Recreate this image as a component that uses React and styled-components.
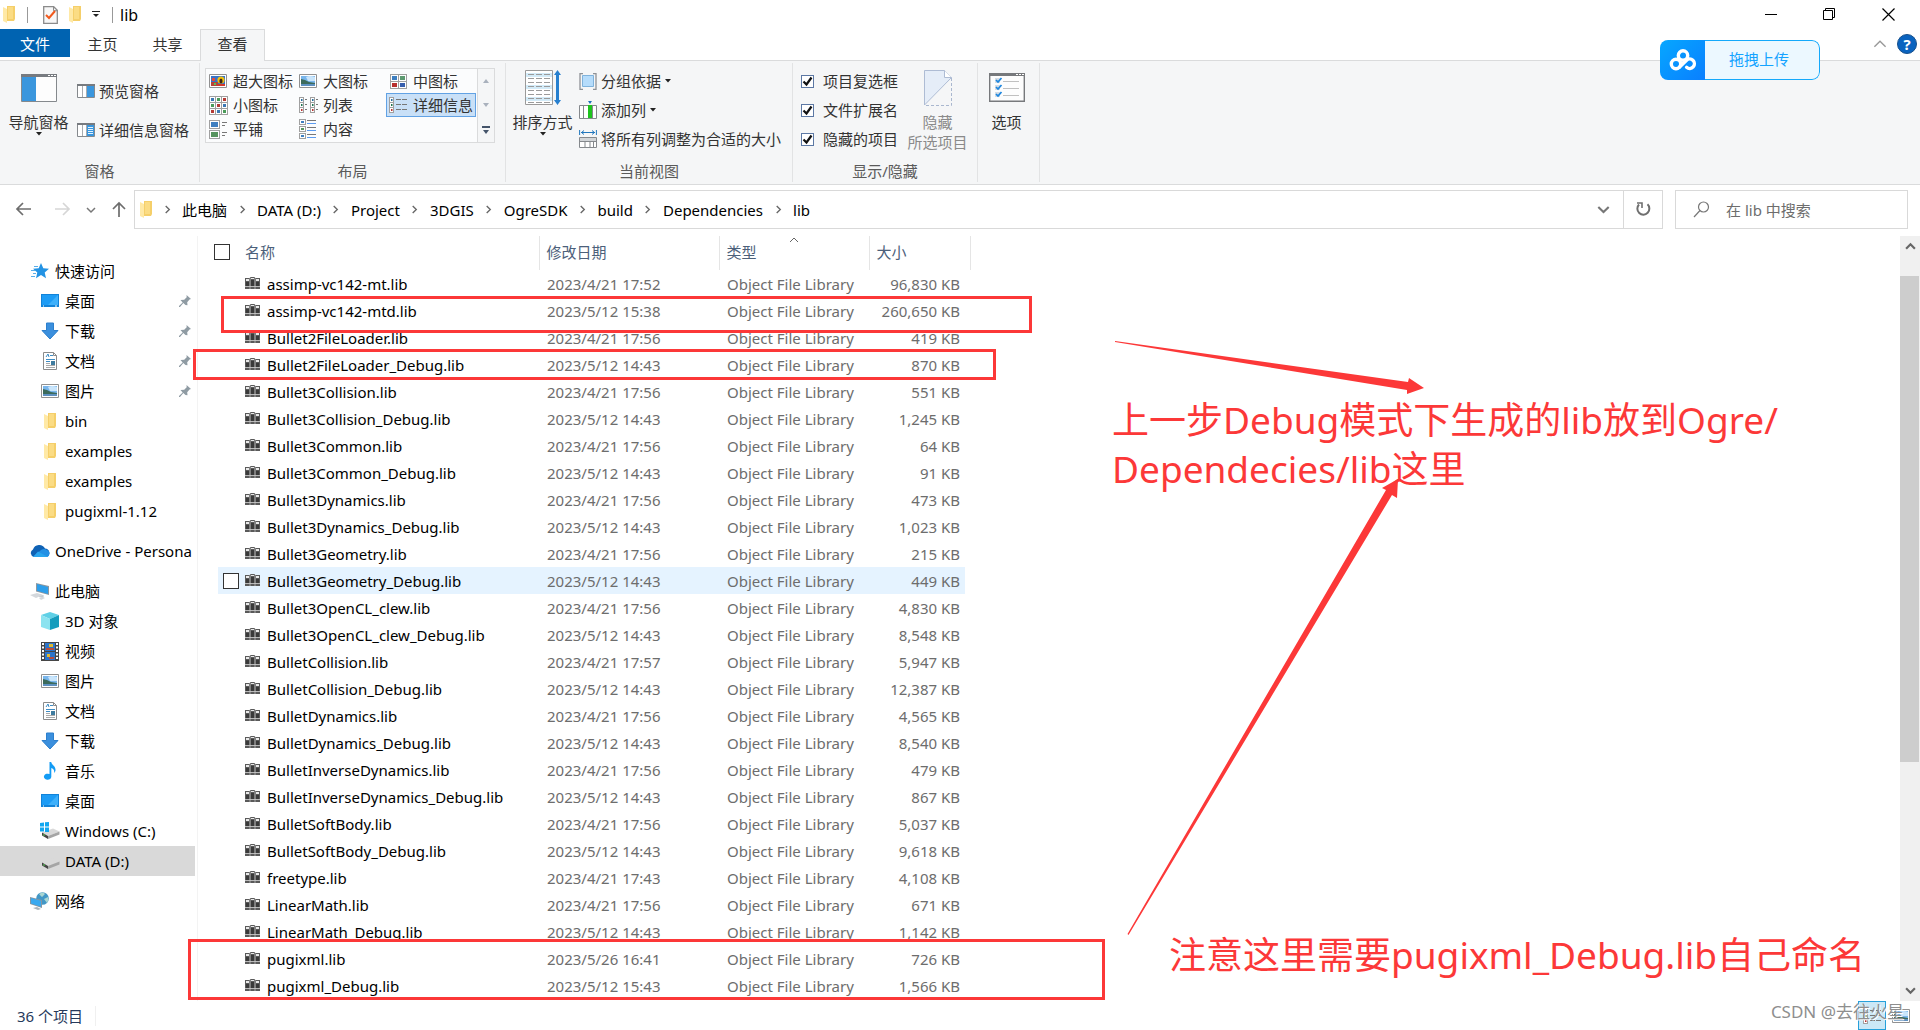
import React, { useState } from 'react';
import styled, { createGlobalStyle } from 'styled-components';

const GlobalStyle = createGlobalStyle`
    * {
        box-sizing: border-box;
    }
    body {
        margin: 0;
        background: #fff;
        color: #000;
        font: 15px/20px "Noto Sans", "Noto Sans CJK SC", sans-serif;
    }
    button, input {
        font: inherit;
        color: inherit;
    }
    button {
        padding: 0;
        border: 0;
        background: none;
        white-space: nowrap;
    }
    a {
        color: inherit;
        text-decoration: none;
    }
    svg {
        display: block;
        flex: none;
    }
`;

/* ---------- icons ---------- */

const FolderIcon = () => <svg width="12" height="17" viewBox="0 0 12 17">
    <path d="M4 0h8v13l-1 2H4z" fill="#f5cf6a" />
    <path d="M5 1h5v12H5z" fill="#fbdc84" />
    <path d="M0 1l4 2v14l-4-2z" fill="#ffe9a6" />
</svg>;

const CheckDocIcon = () => <svg width="15" height="18" viewBox="0 0 15 18">
    <path d="M.7.7h10l3.6 3.6v13H.7z" fill="#f7f7f7" stroke="#8b8b8b" strokeWidth="1.3" />
    <path d="M10.5.7v4h4" fill="none" stroke="#8b8b8b" />
    <path d="M3 9l3 3 6-7" fill="none" stroke="#f1591d" strokeWidth="2" />
</svg>;

const Caret = () => <svg width="6" height="4" viewBox="0 0 6 4">
    <path d="M0 0h6L3 3.5z" fill="#222" />
</svg>;

const Chevron = ({ dir = 'down', size = 10, color = '#666', width = 1.5 }) => {
    const points = {
        down: 'M1 3l4 4 4-4',
        up: 'M1 7l4-4 4 4',
        right: 'M3 1l4 4-4 4',
    };
    return <svg width={size} height={size} viewBox="0 0 10 10">
        <path d={points[dir]} fill="none" stroke={color} strokeWidth={width} />
    </svg>;
};

const ArrowIcon = ({ dir = 'left', color = '#6d6d6d' }) => {
    const paths = {
        left: 'M16 8H2M8 2L2 8l6 6',
        right: 'M1 8h14M9 2l6 6-6 6',
        up: 'M8 16V2M2 8l6-6 6 6',
    };
    return <svg width="17" height="17" viewBox="0 0 17 17">
        <path d={paths[dir]} fill="none" stroke={color} strokeWidth="1.7" />
    </svg>;
};

const NavPaneIcon = () => <svg width="36" height="28" viewBox="0 0 36 28">
    <path d="M.5.5h35v27H.5z" fill="#fdfdfd" stroke="#85898d" />
    <path d="M0 0h36v3H0z" fill="#777b80" />
    <path d="M27 1h2v1h-2zM30 1h2v1h-2zM33 1h2v1h-2z" fill="#fff" />
    <path d="M1 3h14v24H1z" fill="#3a96dd" />
</svg>;

const PaneIcon = ({ details }) => <svg width="18" height="14" viewBox="0 0 18 14">
    <path d="M.5.5h17v13H.5z" fill="#fff" stroke="#85898d" />
    <path d="M0 0h18v2H0z" fill="#777b80" />
    <path d="M5.5 2v11M9.5 2v11" stroke="#a8acb0" />
    <path d="M10 2h7v11h-7z" fill="#3a96dd" />
    {details && <path d="M11 4.5h5M11 6.5h5M11 8.5h5M11 10.5h5" stroke="#e4f2fd" />}
</svg>;

const PictureIcon = () => <svg width="18" height="14" viewBox="0 0 18 14">
    <path d="M.5.5h17v13H.5z" fill="#fff" stroke="#919191" />
    <path d="M2 2h14v10H2z" fill="#79b6ec" />
    <path d="M7 3q4-2 9 0v4H9z" fill="#c9e5fb" />
    <path d="M2 5l4 1 4 2 6 1v1H2z" fill="#3c6b5c" />
    <path d="M2 10h14v2H2z" fill="#5d90c0" />
</svg>;

const HugeIcon = () => <svg width="18" height="14" viewBox="0 0 18 14">
    <path d="M.5.5h17v13H.5z" fill="#fff" stroke="#919191" />
    <path d="M2 2h14v10H2z" fill="#3674c8" />
    <path d="M2 8h7v4H2z" fill="#b94237" />
    <path d="M3 4h3v3H3z" fill="#e24b39" />
    <path d="M5 9h2v2H5z" fill="#5bc050" />
    <circle cx="12" cy="6" r="3.6" fill="#f2c212" />
    <ellipse cx="12" cy="7" rx="1.6" ry="2.6" fill="#3a2415" />
    <path d="M9 10h7v2H9z" fill="#d3392c" />
</svg>;

const Thumb = ({ x, y, w = 6, h = 5, tone = '#3f7fc0' }) => <g>
    <rect x={x + 0.5} y={y + 0.5} width={w} height={h} fill="#fff" stroke="#a0a0a0" />
    <rect x={x + 2} y={y + 2} width={w - 3} height={h - 3} fill={tone} />
</g>;

const MediumIcon = () => <svg width="17" height="15" viewBox="0 0 17 15">
    <Thumb x={0} y={0} w={8} h={7} />
    <Thumb x={8} y={0} w={8} h={7} tone="#5c9a70" />
    <Thumb x={0} y={7} w={8} h={7} tone="#b8312f" />
    <Thumb x={8} y={7} w={8} h={7} tone="#385fae" />
</svg>;

const SmallIcon = () => <svg width="19" height="19" viewBox="0 0 19 19">
    {[0, 6, 12].map((y, r) => [0, 6, 12].map((x, c) =>
        <Thumb key={x + '-' + y} x={x} y={y} w={6} h={6} tone={['#3c78b4', '#4b9b5a', '#b53a35'][(r + c) % 3]} />
    ))}
</svg>;

const ListIcon = () => <svg width="19" height="16" viewBox="0 0 19 16">
    {[0, 11].map(x => <g key={x}>
        <rect x={x + 0.5} y=".5" width="4" height="15" fill="#fff" stroke="#a0a0a0" />
        <path d={`M${x} 5.5h5M${x} 10.5h5`} stroke="#a0a0a0" />
        <path d={`M${x + 6} 2.5h2M${x + 6} 7.5h2M${x + 6} 12.5h2`} stroke="#777" />
        <path d={`M${x + 2} 2h1.5v2h-1.5z`} fill="#256b99" />
        <path d={`M${x + 2} 7h1.5v2h-1.5z`} fill="#1f7350" />
        <path d={`M${x + 2} 12h1.5v2h-1.5z`} fill="#b8312f" />
    </g>)}
</svg>;

const DetailsIcon = () => <svg width="18" height="16" viewBox="0 0 18 16">
    <rect x=".5" y=".5" width="4" height="15" fill="#fff" stroke="#a0a0a0" />
    <path d="M0 5.5h5M0 10.5h5" stroke="#a0a0a0" />
    <path d="M7 2.5h5M13 2.5h5M7 7.5h5M13 7.5h5M7 12.5h5M13 12.5h5" stroke="#777" />
    <path d="M2 2h1.5v2H2z" fill="#256b99" />
    <path d="M2 7h1.5v2H2z" fill="#1f7350" />
    <path d="M2 12h1.5v2H2z" fill="#b8312f" />
</svg>;

const TilesIcon = () => <svg width="18" height="19" viewBox="0 0 18 19">
    <Thumb x={0} y={0} w={10} h={8} />
    <Thumb x={0} y={10} w={10} h={8} tone="#57945f" />
    <path d="M13 2.5h5M13 5.5h3M13 12.5h5M13 15.5h3" stroke="#777" />
</svg>;

const ContentIcon = () => <svg width="18" height="20" viewBox="0 0 18 20">
    <Thumb x={0} y={0} w={6} h={5} />
    <Thumb x={0} y={7} w={6} h={5} tone="#57945f" />
    <Thumb x={0} y={14} w={6} h={5} />
    <path d="M8 1.5h9M8 8.5h9M8 15.5h9" stroke="#777" />
    <path d="M8 4.5h9M8 11.5h9M8 18.5h9" stroke="#5b9bf0" />
</svg>;

const SortIcon = () => <svg width="36" height="36" viewBox="0 0 36 36">
    <path d="M.5.5h27v34H.5z" fill="#fff" stroke="#9a9a9a" />
    <path d="M1 3h26v4H1zM1 15h26v4H1zM1 27h26v4H1z" fill="#d3ebf8" />
    {[5, 9, 13, 17, 21, 25, 29, 33].map(y =>
        <path key={y} d={`M3 ${y - 0.5}h6M11 ${y - 0.5}h6M19 ${y - 0.5}h6`} stroke="#9b9b9b" />
    )}
    <path d="M32.5 0l3.500 5h-2v25h2l-3.500 5-3.500-5h2V5h-2z" fill="#2780cf" />
</svg>;

const GroupIcon = () => <svg width="18" height="17" viewBox="0 0 18 17">
    <path d="M4 .7H1v15.600h3M14 .7h3v15.600h-3" fill="none" stroke="#8e9297" strokeWidth="1.3" />
    <path d="M3.5 2.5h11v11h-11z" fill="#b5dcfb" stroke="#7fb2db" />
</svg>;

const AddColumnIcon = () => <svg width="18" height="18" viewBox="0 0 18 18">
    <path d="M9 0h4l-2 3z" fill="#1d6fb8" />
    <path d="M.5 4.5h17v13H.5zM4.500 4v13M13.500 4v13" fill="#fff" stroke="#85898d" />
    <path d="M9 4h4v13H9z" fill="#1ec31e" />
</svg>;

const FitIcon = () => <svg width="18" height="18" viewBox="0 0 18 18">
    <path d="M.6 0v5M17.400 0v5M2 2.5h14M5 .5l-2.500 2L5 4.500M13 .5l2.500 2L13 4.500" fill="none" stroke="#2277bd" />
    <path d="M.5 7.500h17v10H.5zM.5 11.500h17M6 12v5M11 12v5M14.500 12v5" fill="#fff" stroke="#85898d" />
    <path d="M1 8h16v3H1z" fill="#d2d5d8" />
</svg>;

const HideIcon = () => <svg width="28" height="36" viewBox="0 0 28 36">
    <path d="M.5 35V.5h20l7 7z" fill="#e5edf8" stroke="#aebcd4" />
    <path d="M20.500.5v7h7" fill="#fff" stroke="#aebcd4" />
    <path d="M27.500 8v27.500H1" fill="none" stroke="#a9b7cf" strokeDasharray="3 2" />
</svg>;

const OptionsIcon = () => <svg width="36" height="29" viewBox="0 0 36 29">
    <path d="M.7.7h34.600v27.600H.7z" fill="#fdfdfd" stroke="#77797c" strokeWidth="1.4" />
    <path d="M0 0h36v3H0z" fill="#77797c" />
    <path d="M27 1h2v1h-2zM30 1h2v1h-2zM33 1h2v1h-2z" fill="#fff" />
    {[7, 14, 21].map(y => <g key={y}>
        <path d={`M6 ${y - 2}h5v5H6z`} fill="#d5dde5" />
        <path d={`M7 ${y}l2 2 3.5-4`} fill="none" stroke="#1c86df" strokeWidth="1.7" />
        <path d={`M14 ${y + 1.5}h16`} stroke="#c0c0c0" />
    </g>)}
</svg>;

const StarIcon = () => <svg width="18" height="16" viewBox="0 0 18 16">
    <path d="M10 0l2.300 5.200 5.700.5-4.300 3.700 1.300 5.800-5-3.100-5 3.100L6.300 9.600 2 5.800l5.700-.5z" fill="#2393e4" />
    <path d="M3 3.5h4M0 7.5h4M2 10.5h3M0 13.5h4" stroke="#58aee9" />
</svg>;

const DesktopIcon = () => <svg width="18" height="14" viewBox="0 0 18 14">
    <path d="M0 0h18v13H0z" fill="#1283d8" />
    <path d="M1 1h16v10H1z" fill="#1d9cf5" />
    <path d="M17 1v10H7z" fill="#3eb0fb" />
    <path d="M2 12h1M14 12h2" stroke="#fff" />
</svg>;

const DownloadIcon = () => <svg width="18" height="18" viewBox="0 0 18 18">
    <path d="M5.5 1h7v7.500H17L9 17 1 8.500h4.500z" fill="#3b8fdd" stroke="#2c7fcd" />
</svg>;

const DocumentIcon = () => <svg width="18" height="18" viewBox="0 0 18 18">
    <path d="M2.5.5h10l3 3v14h-13z" fill="#fff" stroke="#8b8b8b" />
    <path d="M12.5.5v3h3" fill="none" stroke="#8b8b8b" />
    <path d="M5 5l2-3 1 3M9 3.5h3M5 7.5h9M5 9.5h4" fill="none" stroke="#3d8cc4" />
    <path d="M10 9h4v4h-4z" fill="#3f7c9f" />
    <path d="M5 11.5h4M5 13.5h9M5 15.5h9" stroke="#a9a9a9" />
</svg>;

const CloudIcon = () => <svg width="20" height="14" viewBox="0 0 20 14">
    <path d="M4 13a4 4 0 0 1-1-7.500A6.500 6.500 0 0 1 15 4.500 4.500 4.500 0 0 1 17 13z" fill="#0f62b5" />
    <path d="M3 13l8-7a5 5 0 0 1 6 0 3.700 3.700 0 0 1 0 7z" fill="#2390e4" />
    <path d="M3 13l5-5.500L18 13z" fill="#29a5ee" />
</svg>;

const ComputerIcon = () => <svg width="20" height="18" viewBox="0 0 20 18">
    <path d="M6 1l13 3v9L6 9.500z" fill="#8c979f" />
    <path d="M7 2l11 3v7L7 8.700z" fill="#2d9eea" />
    <path d="M9 12l5 1.500-1 2.500-4-1z" fill="#c5cbd0" />
    <path d="M0 13l7-2 6 2-7 3zM9 16l4-1 2 1-4 2z" fill="#d4d8dc" />
</svg>;

const CubeIcon = () => <svg width="18" height="18" viewBox="0 0 18 18">
    <path d="M9 0l9 3-9 4-9-4z" fill="#5fd0e6" />
    <path d="M0 3l9 4v11l-9-3z" fill="#8be3f0" />
    <path d="M18 3L9 7v11l9-3z" fill="#159cbd" />
</svg>;

const VideoIcon = () => <svg width="18" height="19" viewBox="0 0 18 19">
    <path d="M0 0h18v19H0z" fill="#464646" />
    <path d="M4 1h10v8H4zM4 10h10v8H4z" fill="#2c75cb" />
    <path d="M8 2h4v3H8zM6 12h3v3H6z" fill="#dfb92f" />
    <path d="M5 6h8v2H5zM8 15h5v2H8z" fill="#b64b3d" />
    <path d="M2 1v17M16 1v17" stroke="#fff" strokeWidth="2" strokeDasharray="2 1.5" />
</svg>;

const MusicIcon = () => <svg width="18" height="18" viewBox="0 0 18 18">
    <path d="M8.500 0h1.700c.3 3 4.800 4 4.300 8.500-.2 1.200-.7 2-1.500 2.500.8-3-.8-4.300-2.700-5v8.500a3.700 3 0 1 1-1.800-2.400z" fill="#139cf5" />
</svg>;

const DriveIcon = ({ system }) => <svg width="20" height="18" viewBox="0 0 20 18">
    <path d="M2 10.500l11-4 6.500 3L8 14z" fill="#d9d9d9" />
    <path d="M2 10.500L8 14v3l-6-3.500z" fill="#454545" />
    <path d="M8 14l11.500-4.500v3L8 17z" fill="#a5a5a5" />
    <path d="M3 12.500h2v1H3z" fill="#56d356" />
    {system && <path d="M0 1l4-.5v4H0zM5 .3l4-.3v4.500H5zM0 5.500h4v4H0zM5 5.500h4V10H5z" fill="#12a7f0" />}
</svg>;

const NetworkIcon = () => <svg width="20" height="18" viewBox="0 0 20 18">
    <circle cx="12.5" cy="6.5" r="6.3" fill="#4297c6" />
    <path d="M9 2q4-3 6 0l-3 3zM14 7l4-2q1 3-1 6z" fill="#a9d6d2" />
    <path d="M0 5l12 3v8L0 12z" fill="#8596a2" />
    <path d="M1 6l10 2.700v6L1 11.500z" fill="#39a9f0" />
    <path d="M3 16l4-1 4 2-3 1z" fill="#aab3ba" />
</svg>;

const PinIcon = () => <svg width="12" height="12" viewBox="0 0 12 12">
    <path d="M7.500 0L12 4l-1.500.6-2.300 2.600.3 3L6.500 10 4.300 8 1 12H0v-1l3.700-3.500L1.500 5l3.700-.3 2.500-2.400z" fill="#8f9ba3" />
</svg>;

const LibIcon = () => <svg width="16" height="14" viewBox="0 0 16 14">
    <path d="M0 1h5v11H0zM5 0h5v12H5zM10 1h5v11h-5z" fill="#5a5a5a" />
    <path d="M1 2h3v2H1zM6 1h3v1H6zM11 2h3v2h-3z" fill="#e9e9e9" />
    <path d="M1 5h3v4H1zM6 3h3v6H6zM11 5h3v4h-3z" fill="#3a3a3a" />
    <path d="M0 9.500h15" stroke="#b8b8b8" />
    <path d="M5 0v12M10 0v12" stroke="#d8d8d8" strokeWidth=".6" />
</svg>;

const RefreshIcon = () => <svg width="17" height="17" viewBox="0 0 17 17">
    <path d="M4 3.500a6 6 0 1 0 8.500-.2" fill="none" stroke="#6f6f6f" strokeWidth="2" />
    <path d="M2 2h5v5" fill="none" stroke="#6f6f6f" strokeWidth="1.6" />
</svg>;

const SearchIcon = () => <svg width="17" height="17" viewBox="0 0 17 17">
    <circle cx="10.5" cy="6" r="5" fill="none" stroke="#777" strokeWidth="1.2" />
    <path d="M7 9.500L1 16" stroke="#777" strokeWidth="1.2" />
</svg>;

const DiskLogo = () => <svg width="28" height="22" viewBox="0 0 28 22">
    <g fill="none" stroke="#fff" strokeWidth="3.4">
        <circle cx="14" cy="6.5" r="4.7" />
        <circle cx="7" cy="15" r="4.7" />
        <path d="M10.300 18.300l7-6.800a4.700 4.700 0 1 1 .3 6.800" strokeLinecap="round" />
    </g>
</svg>;

/* ---------- window and title bar ---------- */

const Window = styled.div`
    position: relative;
    display: flex;
    flex-direction: column;
    min-height: 100vh;
    overflow: hidden;
`;

const TitleBar = styled.header`
    display: flex;
    align-items: center;
    height: 29px;
    padding: 0 25px 0 3px;
`;

const QuickTools = styled.div`
    display: flex;
    flex: 1;
    align-items: center;
    gap: 11px;
`;

const Divider = styled.span`
    width: 1px;
    height: 16px;
    margin: 0 4px 0 1px;
    background: #999;
`;

const WindowTitle = styled.h1`
    margin: 0 0 0 -8px;
    font-size: 16px;
    font-weight: 400;
`;

const WindowButtons = styled.div`
    display: flex;
    gap: 46px;
`;

const Tabs = styled.nav`
    display: flex;
    align-items: flex-start;
    height: 32px;
    border-bottom: 1px solid #dadbdc;
`;

const Tab = styled.button`
    width: 65px;
    height: ${props => props.$active ? '32px' : '28px'};
    padding: ${props => props.$active ? '0 0 3px' : '2px 0 0'};
    border: ${props => props.$active ? '1px solid #dadbdc' : '0'};
    border-bottom: 0;
    background: ${props => props.$active ? '#f5f6f7' : 'transparent'};
    color: #333;
`;

const FileTab = styled(Tab)`
    width: 70px;
    background: #0063b1;
    color: #fff;
`;

const TabsEnd = styled.div`
    display: flex;
    align-items: center;
    gap: 10px;
    height: 30px;
    margin-left: auto;
    padding-right: 3px;
`;

const HelpButton = styled.button`
    width: 20px;
    height: 20px;
    border: 1px solid #17508c;
    border-radius: 50%;
    background: #0a63bf;
    color: #fff;
    font-weight: 700;
    line-height: 18px;
`;

/* ---------- ribbon ---------- */

const Ribbon = styled.section`
    display: flex;
    height: 124px;
    padding: 2px 0;
    border-bottom: 1px solid #dadbdc;
    background: #f5f6f7;
    color: #333;
`;

const Group = styled.div`
    display: flex;
    flex-direction: column;
    justify-content: space-between;
    width: ${props => props.$width}px;
    border-right: 1px solid #e2e3e4;
`;

const GroupBody = styled.div`
    display: flex;
    padding: ${props => props.$pad || '0'};
`;

const GroupName = styled.div`
    padding-bottom: 1px;
    text-align: center;
    color: #5a5a5a;
`;

const BigButton = styled.button`
    display: flex;
    flex-direction: column;
    align-items: center;
    width: ${props => props.$width}px;
    height: 90px;
    color: ${props => props.disabled ? '#8a8a8a' : '#333'};
`;

const BigIcon = styled.span`
    display: flex;
    align-items: center;
    height: 49px;
`;

const Stack = styled.div`
    display: flex;
    flex-direction: column;
    gap: ${props => props.$gap}px;
    padding-top: ${props => props.$top}px;
`;

const SmallButton = styled.button`
    display: flex;
    align-items: center;
    gap: 4px;
    height: 20px;
`;

const Gallery = styled.div`
    display: grid;
    grid-template-columns: repeat(3, 90px);
    grid-auto-rows: 24px;
    width: 272px;
    height: 75px;
    border: 1px solid #dadbdc;
    border-right: 0;
    background: #fbfcfd;
`;

const GalleryItem = styled.button`
    display: flex;
    align-items: center;
    gap: 5px;
    padding-left: 1px;
    border: 1px solid ${props => props.$active ? '#62a2e4' : 'transparent'};
    background: ${props => props.$active ? '#c9e0f7' : 'transparent'};
`;

const GalleryIcon = styled.span`
    display: flex;
    justify-content: center;
    width: 20px;
`;

const GalleryScroll = styled.div`
    display: flex;
    flex-direction: column;
    width: 18px;
    border: 1px solid #dadbdc;

    button {
        display: flex;
        flex: 1;
        align-items: center;
        justify-content: center;
    }
`;

const Check = styled.label`
    display: flex;
    align-items: center;
    gap: 9px;
    height: 20px;
`;

const CheckInput = styled.input`
    appearance: none;
    width: 13px;
    height: 13px;
    margin: 0;
    border: 1px solid #5c78a4;
    background: #fff;

    &:checked {
        background: #fff url("data:image/svg+xml,%3Csvg xmlns='http://www.w3.org/2000/svg' viewBox='0 0 11 11'%3E%3Cpath d='M1.5 5.5l3 3 5-7' fill='none' stroke='%23111' stroke-width='2.2'/%3E%3C/svg%3E");
    }
`;

/* ---------- address bar ---------- */

const AddressRow = styled.div`
    display: flex;
    align-items: center;
    height: 51px;
    padding: 0 12px 2px 15px;
`;

const NavButtons = styled.div`
    display: flex;
    align-items: center;
    gap: 15px;
    width: 119px;

    button:first-child {
        margin-right: 7px;
    }
`;

const AddressBox = styled.div`
    display: flex;
    flex: 1;
    height: 39px;
    border: 1px solid #d9d9d9;
`;

const Crumbs = styled.nav`
    display: flex;
    flex: 1;
    align-items: center;
    padding-left: 5px;
`;

const CrumbSeparator = styled.span`
    display: flex;
    justify-content: center;
    width: 30px;
`;

const BoxButton = styled.button`
    display: flex;
    align-items: center;
    justify-content: center;
    width: 39px;
    border-left: ${props => props.$line ? '1px solid #d9d9d9' : '0'};
`;

const SearchBox = styled.label`
    display: flex;
    align-items: center;
    gap: 16px;
    width: 233px;
    height: 39px;
    margin-left: 12px;
    padding-left: 17px;
    border: 1px solid #d9d9d9;

    input {
        flex: 1;
        min-width: 0;
        padding: 0;
        border: 0;
        outline: 0;
        background: none;
    }
    input::placeholder {
        color: #6d6d6d;
        opacity: 1;
    }
`;

/* ---------- navigation pane ---------- */

const Content = styled.div`
    display: flex;
    flex: 1;
`;

const Sidebar = styled.aside`
    width: 198px;
    padding: 20px 2px 0 0;
    border-right: 1px solid #f3f3f3;
`;

const Tree = styled.ul`
    margin: 0 0 10px;
    padding: 0;
    list-style: none;
`;

const TreeLink = styled.a`
    display: flex;
    align-items: center;
    gap: 5px;
    height: 30px;
    padding-left: ${props => props.$root ? '30px' : '40px'};
    padding-right: 4px;
    background: ${props => props.$selected ? '#d9d9d9' : 'transparent'};
    white-space: nowrap;
    overflow: hidden;
`;

const TreeIcon = styled.span`
    display: flex;
    justify-content: center;
    width: 20px;
`;

const Pin = styled.span`
    margin-left: auto;
`;

/* ---------- file list ---------- */

const FileArea = styled.div`
    display: flex;
    flex: 1;
`;

const FilePane = styled.main`
    flex: 1;
    padding-bottom: 2px;
`;

const FileTable = styled.table`
    width: 772px;
    border-collapse: collapse;
    table-layout: fixed;
`;

const HeadCell = styled.th`
    position: relative;
    height: 34px;
    padding: 0 7px 2px;
    border-right: 1px solid #e5e5e5;
    color: #4c607a;
    font-weight: 400;
    text-align: left;
`;

const HeadName = styled.div`
    display: flex;
    align-items: center;
    gap: 15px;
    padding-left: 9px;
`;

const BoxInput = styled.input`
    appearance: none;
    flex: none;
    width: 16px;
    height: 16px;
    margin: 0;
    border: 1px solid #333;
    background: #fff;
    visibility: ${props => props.$hidden ? 'hidden' : 'visible'};
`;

const SortMark = styled.span`
    position: absolute;
    top: -1px;
    left: calc(50% - 5px);
`;

const FileRow = styled.tr`
    td:not(:first-child):not(:last-child) {
        background: ${props => props.$hot ? '#e5f3ff' : 'transparent'};
    }
`;

const Cell = styled.td`
    height: 27px;
    padding: 0 5px 0 8px;
    color: #6d6d6d;
    text-align: ${props => props.$right ? 'right' : 'left'};
    white-space: nowrap;
`;

const NameCell = styled(Cell)`
    padding: 0 5px;
    color: #000;
`;

const FileName = styled.div`
    display: flex;
    align-items: center;
    gap: 6px;
`;

const Scrollbar = styled.div`
    display: flex;
    flex-direction: column;
    align-items: center;
    width: 20px;
    background: #f0f0f0;

    button {
        display: flex;
        align-items: flex-start;
        justify-content: center;
        height: 40px;
        padding: 5px 0;
    }
    button:last-child {
        align-items: flex-end;
    }
`;

const Track = styled.div`
    flex: 1;
    align-self: stretch;
`;

const ScrollThumb = styled.div`
    width: 19px;
    height: 71%;
    background: #cdcdcd;
`;

const StatusBar = styled.footer`
    display: flex;
    align-items: center;
    justify-content: space-between;
    height: 29px;
    padding: 0 10px 0 17px;
    color: #26395b;
`;

const StatusCount = styled.span`
    padding-right: 12px;
    border-right: 1px solid #f0f0f0;
`;

const ViewButtons = styled.div`
    display: flex;
    align-items: center;
    gap: 6px;
`;

const ViewButton = styled.button`
    display: flex;
    align-items: center;
    justify-content: center;
    width: ${props => props.$active ? '28px' : '18px'};
    height: 29px;
    border: ${props => props.$active ? '1px solid #26a0da' : '0'};
    background: ${props => props.$active ? '#cbe8f6' : 'transparent'};
`;

/* ---------- things floating over the window ---------- */

const UploadButton = styled.button`
    position: absolute;
    top: 40px;
    right: 100px;
    display: flex;
    width: 160px;
    height: 40px;
    border-radius: 8px;
    overflow: hidden;
    background: #ecf8ff;
    color: #14a3ff;
`;

const UploadLogo = styled.span`
    display: flex;
    align-items: center;
    justify-content: center;
    width: 45px;
    height: 40px;
    background: linear-gradient(135deg, #06a7ff, #0a7fff);
`;

const UploadText = styled.span`
    flex: 1;
    height: 40px;
    padding-right: 6px;
    border: 1px solid #14a9fb;
    border-left: 0;
    border-radius: 0 8px 8px 0;
    line-height: 36px;
`;

const Frame = styled.div`
    position: absolute;
    left: ${props => props.$left}px;
    top: ${props => props.$top}px;
    width: ${props => props.$width}px;
    height: ${props => props.$height}px;
    border: 3px solid #fc3838;
    pointer-events: none;
`;

const Note = styled.p`
    position: absolute;
    left: ${props => props.$left}px;
    top: ${props => props.$top}px;
    margin: 0;
    color: #fc3838;
    font-size: 37px;
    line-height: 49px;
    white-space: nowrap;
`;

const Arrows = styled.svg`
    position: absolute;
    left: 1100px;
    top: 330px;
    pointer-events: none;
`;

const Watermark = styled.span`
    position: absolute;
    right: 16px;
    bottom: 7px;
    color: #8e8e8e;
    font-size: 17px;
    line-height: 22px;
    text-shadow: 1px 1px 0 #fff;
`;

const galleryItems = [
    ['超大图标', HugeIcon],
    ['大图标', PictureIcon],
    ['中图标', MediumIcon],
    ['小图标', SmallIcon],
    ['列表', ListIcon],
    ['详细信息', DetailsIcon],
    ['平铺', TilesIcon],
    ['内容', ContentIcon],
];

const crumbs = ['此电脑', 'DATA (D:)', 'Project', '3DGIS', 'OgreSDK', 'build', 'Dependencies', 'lib'];

const SystemDriveIcon = () => <DriveIcon system />;

const tree = [
    [
        ['快速访问', StarIcon],
        ['桌面', DesktopIcon, true],
        ['下载', DownloadIcon, true],
        ['文档', DocumentIcon, true],
        ['图片', PictureIcon, true],
        ['bin', FolderIcon],
        ['examples', FolderIcon],
        ['examples', FolderIcon],
        ['pugixml-1.12', FolderIcon],
    ],
    [
        ['OneDrive - Persona', CloudIcon],
    ],
    [
        ['此电脑', ComputerIcon],
        ['3D 对象', CubeIcon],
        ['视频', VideoIcon],
        ['图片', PictureIcon],
        ['文档', DocumentIcon],
        ['下载', DownloadIcon],
        ['音乐', MusicIcon],
        ['桌面', DesktopIcon],
        ['Windows (C:)', SystemDriveIcon],
        ['DATA (D:)', DriveIcon],
    ],
    [
        ['网络', NetworkIcon],
    ],
];

const files = [
    ['assimp-vc142-mt.lib', '2023/4/21 17:52', '96,830 KB'],
    ['assimp-vc142-mtd.lib', '2023/5/12 15:38', '260,650 KB'],
    ['Bullet2FileLoader.lib', '2023/4/21 17:56', '419 KB'],
    ['Bullet2FileLoader_Debug.lib', '2023/5/12 14:43', '870 KB'],
    ['Bullet3Collision.lib', '2023/4/21 17:56', '551 KB'],
    ['Bullet3Collision_Debug.lib', '2023/5/12 14:43', '1,245 KB'],
    ['Bullet3Common.lib', '2023/4/21 17:56', '64 KB'],
    ['Bullet3Common_Debug.lib', '2023/5/12 14:43', '91 KB'],
    ['Bullet3Dynamics.lib', '2023/4/21 17:56', '473 KB'],
    ['Bullet3Dynamics_Debug.lib', '2023/5/12 14:43', '1,023 KB'],
    ['Bullet3Geometry.lib', '2023/4/21 17:56', '215 KB'],
    ['Bullet3Geometry_Debug.lib', '2023/5/12 14:43', '449 KB'],
    ['Bullet3OpenCL_clew.lib', '2023/4/21 17:56', '4,830 KB'],
    ['Bullet3OpenCL_clew_Debug.lib', '2023/5/12 14:43', '8,548 KB'],
    ['BulletCollision.lib', '2023/4/21 17:57', '5,947 KB'],
    ['BulletCollision_Debug.lib', '2023/5/12 14:43', '12,387 KB'],
    ['BulletDynamics.lib', '2023/4/21 17:56', '4,565 KB'],
    ['BulletDynamics_Debug.lib', '2023/5/12 14:43', '8,540 KB'],
    ['BulletInverseDynamics.lib', '2023/4/21 17:56', '479 KB'],
    ['BulletInverseDynamics_Debug.lib', '2023/5/12 14:43', '867 KB'],
    ['BulletSoftBody.lib', '2023/4/21 17:56', '5,037 KB'],
    ['BulletSoftBody_Debug.lib', '2023/5/12 14:43', '9,618 KB'],
    ['freetype.lib', '2023/4/21 17:43', '4,108 KB'],
    ['LinearMath.lib', '2023/4/21 17:56', '671 KB'],
    ['LinearMath_Debug.lib', '2023/5/12 14:43', '1,142 KB'],
    ['pugixml.lib', '2023/5/26 16:41', '726 KB'],
    ['pugixml_Debug.lib', '2023/5/12 15:43', '1,566 KB'],
];

function Header() {
    return <>
        <TitleBar>
            <QuickTools>
                <FolderIcon />
                <Divider />
                <button aria-label="属性"><CheckDocIcon /></button>
                <button aria-label="新建文件夹"><FolderIcon /></button>
                <button aria-label="自定义快速访问工具栏">
                    <svg width="8" height="7" viewBox="0 0 8 7">
                        <path d="M0 .5h8" stroke="#222" />
                        <path d="M1 3h6L4 6z" fill="#222" />
                    </svg>
                </button>
                <Divider />
                <WindowTitle>lib</WindowTitle>
            </QuickTools>
            <WindowButtons>
                <button aria-label="最小化">
                    <svg width="12" height="13" viewBox="0 0 12 13"><path d="M0 6.5h12" stroke="#000" /></svg>
                </button>
                <button aria-label="还原">
                    <svg width="13" height="13" viewBox="0 0 13 13">
                        <path d="M.5 2.5h9v9h-9zM2.500 2V.5h9v9H10" fill="none" stroke="#000" />
                    </svg>
                </button>
                <button aria-label="关闭">
                    <svg width="13" height="13" viewBox="0 0 13 13">
                        <path d="M.5.5l12 12M12.500.5l-12 12" stroke="#000" strokeWidth="1.2" />
                    </svg>
                </button>
            </WindowButtons>
        </TitleBar>
        <Tabs>
            <FileTab>文件</FileTab>
            <Tab>主页</Tab>
            <Tab>共享</Tab>
            <Tab $active>查看</Tab>
            <TabsEnd>
                <button aria-label="最小化功能区"><Chevron dir="up" size={14} color="#999" width={1} /></button>
                <HelpButton aria-label="帮助">?</HelpButton>
            </TabsEnd>
        </Tabs>
    </>;
}

function RibbonBar() {
    const [view, setView] = useState('详细信息');
    return <Ribbon>
        <Group $width={200}>
            <GroupBody>
                <BigButton $width={77}>
                    <BigIcon><NavPaneIcon /></BigIcon>
                    导航窗格
                    <Caret />
                </BigButton>
                <Stack $top={18} $gap={19}>
                    <SmallButton><PaneIcon />预览窗格</SmallButton>
                    <SmallButton><PaneIcon details />详细信息窗格</SmallButton>
                </Stack>
            </GroupBody>
            <GroupName>窗格</GroupName>
        </Group>
        <Group $width={306}>
            <GroupBody $pad="5px 0 0 5px">
                <Gallery>
                    {galleryItems.map(([label, Icon]) =>
                        <GalleryItem key={label} $active={view === label} onClick={() => setView(label)}>
                            <GalleryIcon><Icon /></GalleryIcon>
                            {label}
                        </GalleryItem>
                    )}
                </Gallery>
                <GalleryScroll>
                    <button aria-label="上一行">
                        <svg width="6" height="4" viewBox="0 0 6 4"><path d="M0 4h6L3 0z" fill="#a9b1bd" /></svg>
                    </button>
                    <button aria-label="下一行">
                        <svg width="6" height="4" viewBox="0 0 6 4"><path d="M0 0h6L3 4z" fill="#a9b1bd" /></svg>
                    </button>
                    <button aria-label="其他">
                        <svg width="8" height="8" viewBox="0 0 8 8">
                            <path d="M0 0h8v2H0zM1 4h6L4 8z" fill="#44546a" />
                        </svg>
                    </button>
                </GalleryScroll>
            </GroupBody>
            <GroupName>布局</GroupName>
        </Group>
        <Group $width={287}>
            <GroupBody>
                <BigButton $width={73}>
                    <BigIcon><SortIcon /></BigIcon>
                    排序方式
                    <Caret />
                </BigButton>
                <Stack $top={8} $gap={9}>
                    <SmallButton><GroupIcon />分组依据<Caret /></SmallButton>
                    <SmallButton><AddColumnIcon />添加列<Caret /></SmallButton>
                    <SmallButton><FitIcon />将所有列调整为合适的大小</SmallButton>
                </Stack>
            </GroupBody>
            <GroupName>当前视图</GroupName>
        </Group>
        <Group $width={185}>
            <GroupBody $pad="0 0 0 8px">
                <Stack $top={8} $gap={9}>
                    {['项目复选框', '文件扩展名', '隐藏的项目'].map(label =>
                        <Check key={label}><CheckInput type="checkbox" defaultChecked />{label}</Check>
                    )}
                </Stack>
                <BigButton $width={79} disabled>
                    <BigIcon><HideIcon /></BigIcon>
                    隐藏<br />所选项目
                </BigButton>
            </GroupBody>
            <GroupName>显示/隐藏</GroupName>
        </Group>
        <Group $width={62}>
            <GroupBody>
                <BigButton $width={57}>
                    <BigIcon><OptionsIcon /></BigIcon>
                    选项
                </BigButton>
            </GroupBody>
        </Group>
    </Ribbon>;
}

function AddressBar() {
    return <AddressRow>
        <NavButtons>
            <button aria-label="后退"><ArrowIcon /></button>
            <button aria-label="前进"><ArrowIcon dir="right" color="#d6d6d6" /></button>
            <button aria-label="最近浏览的位置"><Chevron color="#777" /></button>
            <button aria-label="上移"><ArrowIcon dir="up" /></button>
        </NavButtons>
        <AddressBox>
            <Crumbs>
                <FolderIcon />
                {crumbs.map(crumb => <React.Fragment key={crumb}>
                    <CrumbSeparator><Chevron dir="right" size={9} /></CrumbSeparator>
                    <a href="#path">{crumb}</a>
                </React.Fragment>)}
            </Crumbs>
            <BoxButton aria-label="以前的位置"><Chevron size={13} width={1.6} color="#777" /></BoxButton>
            <BoxButton $line aria-label="刷新"><RefreshIcon /></BoxButton>
        </AddressBox>
        <SearchBox>
            <SearchIcon />
            <input type="text" placeholder="在 lib 中搜索" aria-label="在 lib 中搜索" />
        </SearchBox>
    </AddressRow>;
}

function NavigationPane() {
    return <Sidebar>
        {tree.map((items, section) => <Tree key={section}>
            {items.map(([label, Icon, pinned], index) => <li key={index}>
                <TreeLink href="#folder" $root={index === 0} $selected={label === 'DATA (D:)'}>
                    <TreeIcon><Icon /></TreeIcon>
                    {label}
                    {pinned && <Pin><PinIcon /></Pin>}
                </TreeLink>
            </li>)}
        </Tree>)}
    </Sidebar>;
}

function FileList() {
    return <FileTable>
        <colgroup>
            <col width="20" />
            <col width="321" />
            <col width="180" />
            <col width="150" />
            <col width="96" />
            <col width="5" />
        </colgroup>
        <thead>
            <tr>
                <HeadCell colSpan={2}>
                    <HeadName><BoxInput type="checkbox" aria-label="全选" />名称</HeadName>
                </HeadCell>
                <HeadCell>修改日期</HeadCell>
                <HeadCell>类型<SortMark><Chevron dir="up" color="#666" width={1} /></SortMark></HeadCell>
                <HeadCell colSpan={2}>大小</HeadCell>
            </tr>
        </thead>
        <tbody>
            {files.map(([name, date, size]) => {
                const hot = name === 'Bullet3Geometry_Debug.lib';
                return <FileRow key={name} $hot={hot}>
                    <td />
                    <NameCell>
                        <FileName>
                            <BoxInput type="checkbox" aria-label={name} $hidden={!hot} />
                            <LibIcon />
                            {name}
                        </FileName>
                    </NameCell>
                    <Cell>{date}</Cell>
                    <Cell>Object File Library</Cell>
                    <Cell $right>{size}</Cell>
                    <td />
                </FileRow>;
            })}
        </tbody>
    </FileTable>;
}

function Annotations() {
    return <>
        <Frame $left={221} $top={296} $width={811} $height={37} />
        <Frame $left={193} $top={349} $width={803} $height={31} />
        <Frame $left={188} $top={939} $width={917} $height={61} />
        <Note $left={1112} $top={395}>上一步Debug模式下生成的lib放到Ogre/<br />Dependecies/lib这里</Note>
        <Note $left={1169} $top={930}>注意这里需要pugixml_Debug.lib自己命名</Note>
        <Arrows width="340" height="620" viewBox="0 0 340 620">
            <path d="M15 11l293 41 1-4 15 10-17 6v-4L15 12z" fill="#fc3838" />
            <path d="M27.500 604L286 160l-4-2 16-9-1 19-5-3L28.500 605z" fill="#fc3838" />
        </Arrows>
    </>;
}

export default function App() {
    return <Window>
        <GlobalStyle />
        <Header />
        <RibbonBar />
        <AddressBar />
        <Content>
            <NavigationPane />
            <FileArea>
                <FilePane><FileList /></FilePane>
                <Scrollbar>
                    <button aria-label="向上滚动"><Chevron dir="up" size={11} width={2} /></button>
                    <Track><ScrollThumb /></Track>
                    <button aria-label="向下滚动"><Chevron size={11} width={2} /></button>
                </Scrollbar>
            </FileArea>
        </Content>
        <StatusBar>
            <StatusCount>36 个项目</StatusCount>
            <ViewButtons>
                <ViewButton $active aria-label="详细信息"><DetailsIcon /></ViewButton>
                <ViewButton aria-label="大图标"><PictureIcon /></ViewButton>
            </ViewButtons>
        </StatusBar>
        <Annotations />
        <UploadButton>
            <UploadLogo><DiskLogo /></UploadLogo>
            <UploadText>拖拽上传</UploadText>
        </UploadButton>
        <Watermark>CSDN @去往火星</Watermark>
    </Window>;
}
